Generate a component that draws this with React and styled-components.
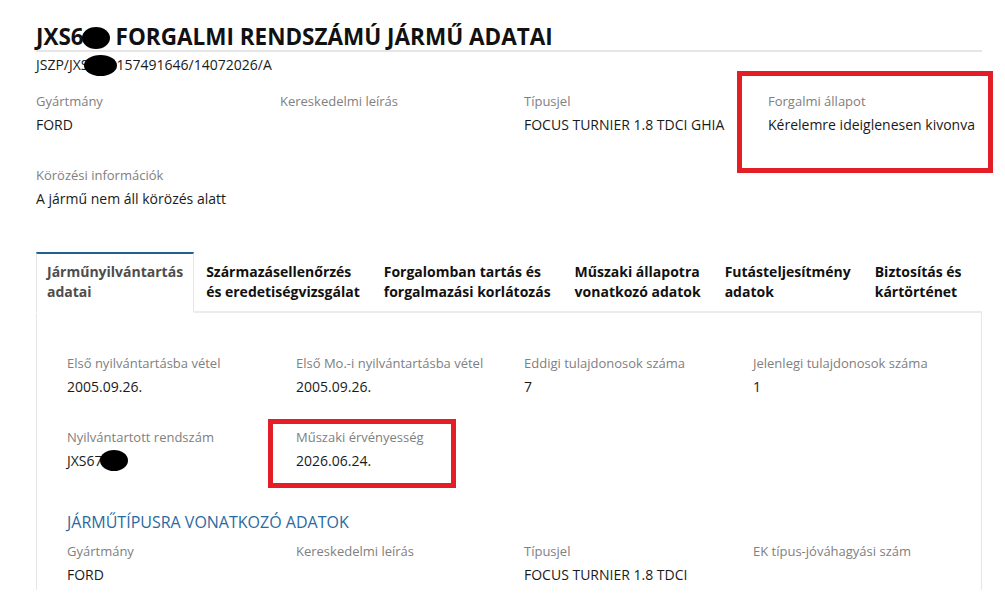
import styled, { createGlobalStyle } from "styled-components";

const GlobalStyle = createGlobalStyle`
  html, body {
    margin: 0;
    padding: 0;
    background: #ffffff;
  }
  body {
    font-family: "Open Sans", "Noto Sans", sans-serif;
    color: #1a1a1a;
  }
`;

const summary = [
  { label: "Gyártmány", value: "FORD" },
  { label: "Kereskedelmi leírás", value: "" },
  { label: "Típusjel", value: "FOCUS TURNIER 1.8 TDCI GHIA" },
  { label: "Forgalmi állapot", value: "Kérelemre ideiglenesen kivonva", marked: "status" },
  { label: "Körözési információk", value: "A jármű nem áll körözés alatt" },
];

const tabs = [
  ["Járműnyilvántartás", "adatai"],
  ["Származásellenőrzés", "és eredetiségvizsgálat"],
  ["Forgalomban tartás és", "forgalmazási korlátozás"],
  ["Műszaki állapotra", "vonatkozó adatok"],
  ["Futásteljesítmény", "adatok"],
  ["Biztosítás és", "kártörténet"],
];

const typeData = [
  { label: "Gyártmány", value: "FORD" },
  { label: "Kereskedelmi leírás", value: "" },
  { label: "Típusjel", value: "FOCUS TURNIER 1.8 TDCI GHIA" },
  { label: "EK típus-jóváhagyási szám", value: "" },
];

export default function App() {
  return (
    <>
      <GlobalStyle />
      <Page>
        <Title>
          JXS6<Blot $w={28} $h={22} $shift={-2} /> FORGALMI RENDSZÁMÚ JÁRMŰ ADATAI
        </Title>
        <Reference>
          JSZP/JXS<Blot $w={33} $h={21} $shift={-5} />157491646/14072026/A
        </Reference>

        <SummaryGrid>
          {summary.map((item) => (
            <Field key={item.label} $marked={item.marked}>
              <Label>{item.label}</Label>
              <Value>{item.value}</Value>
            </Field>
          ))}
        </SummaryGrid>

        <TabBar>
          {tabs.map((lines, i) => (
            <Tab key={lines[0]} $active={i === 0}>
              {lines[0]}
              <br />
              {lines[1]}
            </Tab>
          ))}
          <TabFill />
        </TabBar>

        <Panel>
          <PanelGrid>
            <Field>
              <Label>Első nyilvántartásba vétel</Label>
              <Value>2005.09.26.</Value>
            </Field>
            <Field>
              <Label>Első Mo.-i nyilvántartásba vétel</Label>
              <Value>2005.09.26.</Value>
            </Field>
            <Field>
              <Label>Eddigi tulajdonosok száma</Label>
              <Value>7</Value>
            </Field>
            <Field>
              <Label>Jelenlegi tulajdonosok száma</Label>
              <Value>1</Value>
            </Field>
            <Field>
              <Label>Nyilvántartott rendszám</Label>
              <Value>
                JXS67<Blot $w={28} $h={21} $shift={-3} />
              </Value>
            </Field>
            <Field $marked="inspection">
              <Label>Műszaki érvényesség</Label>
              <Value>2026.06.24.</Value>
            </Field>
          </PanelGrid>

          <SectionTitle>JÁRMŰTÍPUSRA VONATKOZÓ ADATOK</SectionTitle>

          <PanelGrid>
            {typeData.map((item) => (
              <Field key={item.label}>
                <Label>{item.label}</Label>
                <Value>{item.value}</Value>
              </Field>
            ))}
          </PanelGrid>
        </Panel>
      </Page>
    </>
  );
}

const Page = styled.div`
  height: 590px;
  overflow: hidden;
  padding: 26px 23px 0 36px;
  box-sizing: border-box;
`;

const Title = styled.h1`
  margin: 0;
  font-size: 22.5px;
  line-height: 22px;
  font-weight: 700;
  color: #111111;
  border-bottom: 2px solid #e6e6e6;
  white-space: nowrap;
`;

const Reference = styled.div`
  margin-top: 3px;
  font-size: 14px;
  line-height: 20px;
  color: #1a1a1a;
`;

const Blot = styled.span`
  display: inline-block;
  width: ${(p) => p.$w}px;
  height: ${(p) => p.$h}px;
  margin-left: ${(p) => p.$shift || 0}px;
  background: #000000;
  border-radius: 50%;
  vertical-align: middle;
  position: relative;
  top: -1px;
`;

const SummaryGrid = styled.div`
  display: grid;
  grid-template-columns: repeat(4, 244px);
  row-gap: 30px;
  margin-top: 14px;
`;

const Field = styled.div`
  position: relative;
  display: flex;
  flex-direction: column;
  gap: 4px;
  padding-right: 30px;

  ${(p) =>
    p.$marked &&
    `
    &::after {
      content: "";
      position: absolute;
      border: 5px solid #e41e26;
      box-sizing: border-box;
      pointer-events: none;
      ${
        p.$marked === "status"
          ? "left: -31px; top: -20px; width: 256px; height: 102px;"
          : "left: -28px; top: -8px; width: 188px; height: 69px;"
      }
    }
  `}
`;

const Label = styled.div`
  font-size: 13px;
  line-height: 20px;
  color: #808080;
`;

const Value = styled.div`
  font-size: 14px;
  line-height: 20px;
  min-height: 20px;
  color: #1a1a1a;
`;

const TabBar = styled.div`
  display: flex;
  margin-top: 43px;
`;

const Tab = styled.div`
  padding: ${(p) => (p.$active ? "8px 10px 9px" : "8px 12px 9px")};
  font-size: 14px;
  line-height: 20px;
  font-weight: 700;
  white-space: nowrap;
  color: ${(p) => (p.$active ? "#4d4d4d" : "#111111")};
  border-top: ${(p) => (p.$active ? "2px solid #22608f" : "none")};
  border-left: ${(p) => (p.$active ? "1px solid #e6e6e6" : "none")};
  border-right: ${(p) => (p.$active ? "1px solid #e6e6e6" : "none")};
  border-bottom: ${(p) => (p.$active ? "2px solid transparent" : "2px solid #ebebeb")};
  margin-top: ${(p) => (p.$active ? "0" : "2px")};
`;

const TabFill = styled.div`
  flex: 1;
  border-bottom: 2px solid #ebebeb;
`;

const Panel = styled.div`
  border-left: 1px solid #e6e6e6;
  border-right: 1px solid #e6e6e6;
  padding: 40px 0 40px 30px;
`;

const PanelGrid = styled.div`
  display: grid;
  grid-template-columns: 229px 228px 229px 1fr;
  row-gap: 30px;
`;

const SectionTitle = styled.h2`
  margin: 39px 0 8px;
  font-size: 16px;
  line-height: 22px;
  font-weight: 400;
  color: #2b6aa0;
`;
